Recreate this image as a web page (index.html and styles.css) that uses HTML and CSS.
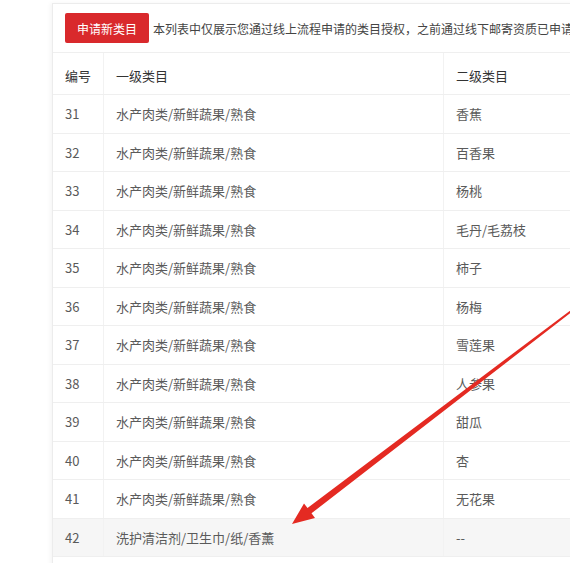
FILE: index.html
```html
<!DOCTYPE html>
<html lang="zh-CN">
<head>
<meta charset="utf-8">
<link rel="stylesheet" href="styles.css">
</head>
<body>
<div class="page">
  <div class="card">
    <div class="toolbar">
      <button class="btn-apply">申请新类目</button>
      <span class="notice">本列表中仅展示您通过线上流程申请的类目授权，之前通过线下邮寄资质已申请的类目授权不在此展示</span>
    </div>
    <table class="grid">
      <thead>
        <tr><th class="c-no">编号</th><th class="c-l1">一级类目</th><th class="c-l2">二级类目</th></tr>
      </thead>
      <tbody>
        <tr><td>31</td><td>水产肉类/新鲜蔬果/熟食</td><td>香蕉</td></tr>
        <tr><td>32</td><td>水产肉类/新鲜蔬果/熟食</td><td>百香果</td></tr>
        <tr><td>33</td><td>水产肉类/新鲜蔬果/熟食</td><td>杨桃</td></tr>
        <tr><td>34</td><td>水产肉类/新鲜蔬果/熟食</td><td>毛丹/毛荔枝</td></tr>
        <tr><td>35</td><td>水产肉类/新鲜蔬果/熟食</td><td>柿子</td></tr>
        <tr><td>36</td><td>水产肉类/新鲜蔬果/熟食</td><td>杨梅</td></tr>
        <tr><td>37</td><td>水产肉类/新鲜蔬果/熟食</td><td>雪莲果</td></tr>
        <tr><td>38</td><td>水产肉类/新鲜蔬果/熟食</td><td>人参果</td></tr>
        <tr><td>39</td><td>水产肉类/新鲜蔬果/熟食</td><td>甜瓜</td></tr>
        <tr><td>40</td><td>水产肉类/新鲜蔬果/熟食</td><td>杏</td></tr>
        <tr><td>41</td><td>水产肉类/新鲜蔬果/熟食</td><td>无花果</td></tr>
        <tr class="hover"><td>42</td><td>洗护清洁剂/卫生巾/纸/香薰</td><td>--</td></tr>
      </tbody>
    </table>
  </div>
  <svg class="arrow" width="570" height="563" viewBox="0 0 570 563">
    <polygon fill="#e42a22" points="292,524 315,518 311.5,513.3 574.6,309.8 573.4,308.2 307.5,508.1 304,503.5"/>
  </svg>
</div>
</body>
</html>
```

FILE: styles.css
```css
html, body {
  margin: 0;
  padding: 0;
  background: #ffffff;
  overflow: hidden;
}
body {
  font-family: "Noto Sans CJK SC", "Liberation Sans", sans-serif;
  font-size: 13px;
  color: #555;
}
.page {
  position: relative;
  width: 570px;
  height: 563px;
  overflow: hidden;
}
.card {
  margin-left: 52px;
  margin-top: 3px;
  width: 760px;
  border-top: 1px solid #ececec;
  border-left: 1px solid #ececec;
  box-shadow: -2px 0 4px rgba(0,0,0,0.04);
  background: #fff;
  padding-right: 6px;
  height: 600px;
}
.toolbar {
  display: flex;
  align-items: center;
  gap: 4px;
  padding-top: 9px;
  padding-bottom: 9px;
  border-bottom: 1px solid #efefef;
  white-space: nowrap;
}
.btn-apply {
  margin-left: 12px;
  width: 84px;
  height: 30px;
  border: none;
  border-radius: 2px;
  background: #d9292c;
  color: #fff;
  font-family: inherit;
  font-size: 12px;
  padding: 0;
}
.notice {
  font-size: 12px;
  color: #444;
}
.grid {
  border-collapse: collapse;
  width: 100%;
  table-layout: fixed;
}
.grid th, .grid td {
  text-align: left;
  font-weight: normal;
  padding: 0 0 0 12px;
  border-bottom: 1px solid #efefef;
  border-right: 1px solid #f2f2f2;
  white-space: nowrap;
}
.grid th {
  height: 37px;
  padding-top: 4px;
  color: #333;
}
.grid td {
  height: 37.5px;
  color: #5a5a5a;
}
.c-no { width: 38px; }
.c-l1 { width: 327px; }
.c-l2 { width: auto; }
.grid tr.hover td {
  background: #f6f6f6;
}
.arrow {
  position: absolute;
  left: 0;
  top: 0;
}
```
